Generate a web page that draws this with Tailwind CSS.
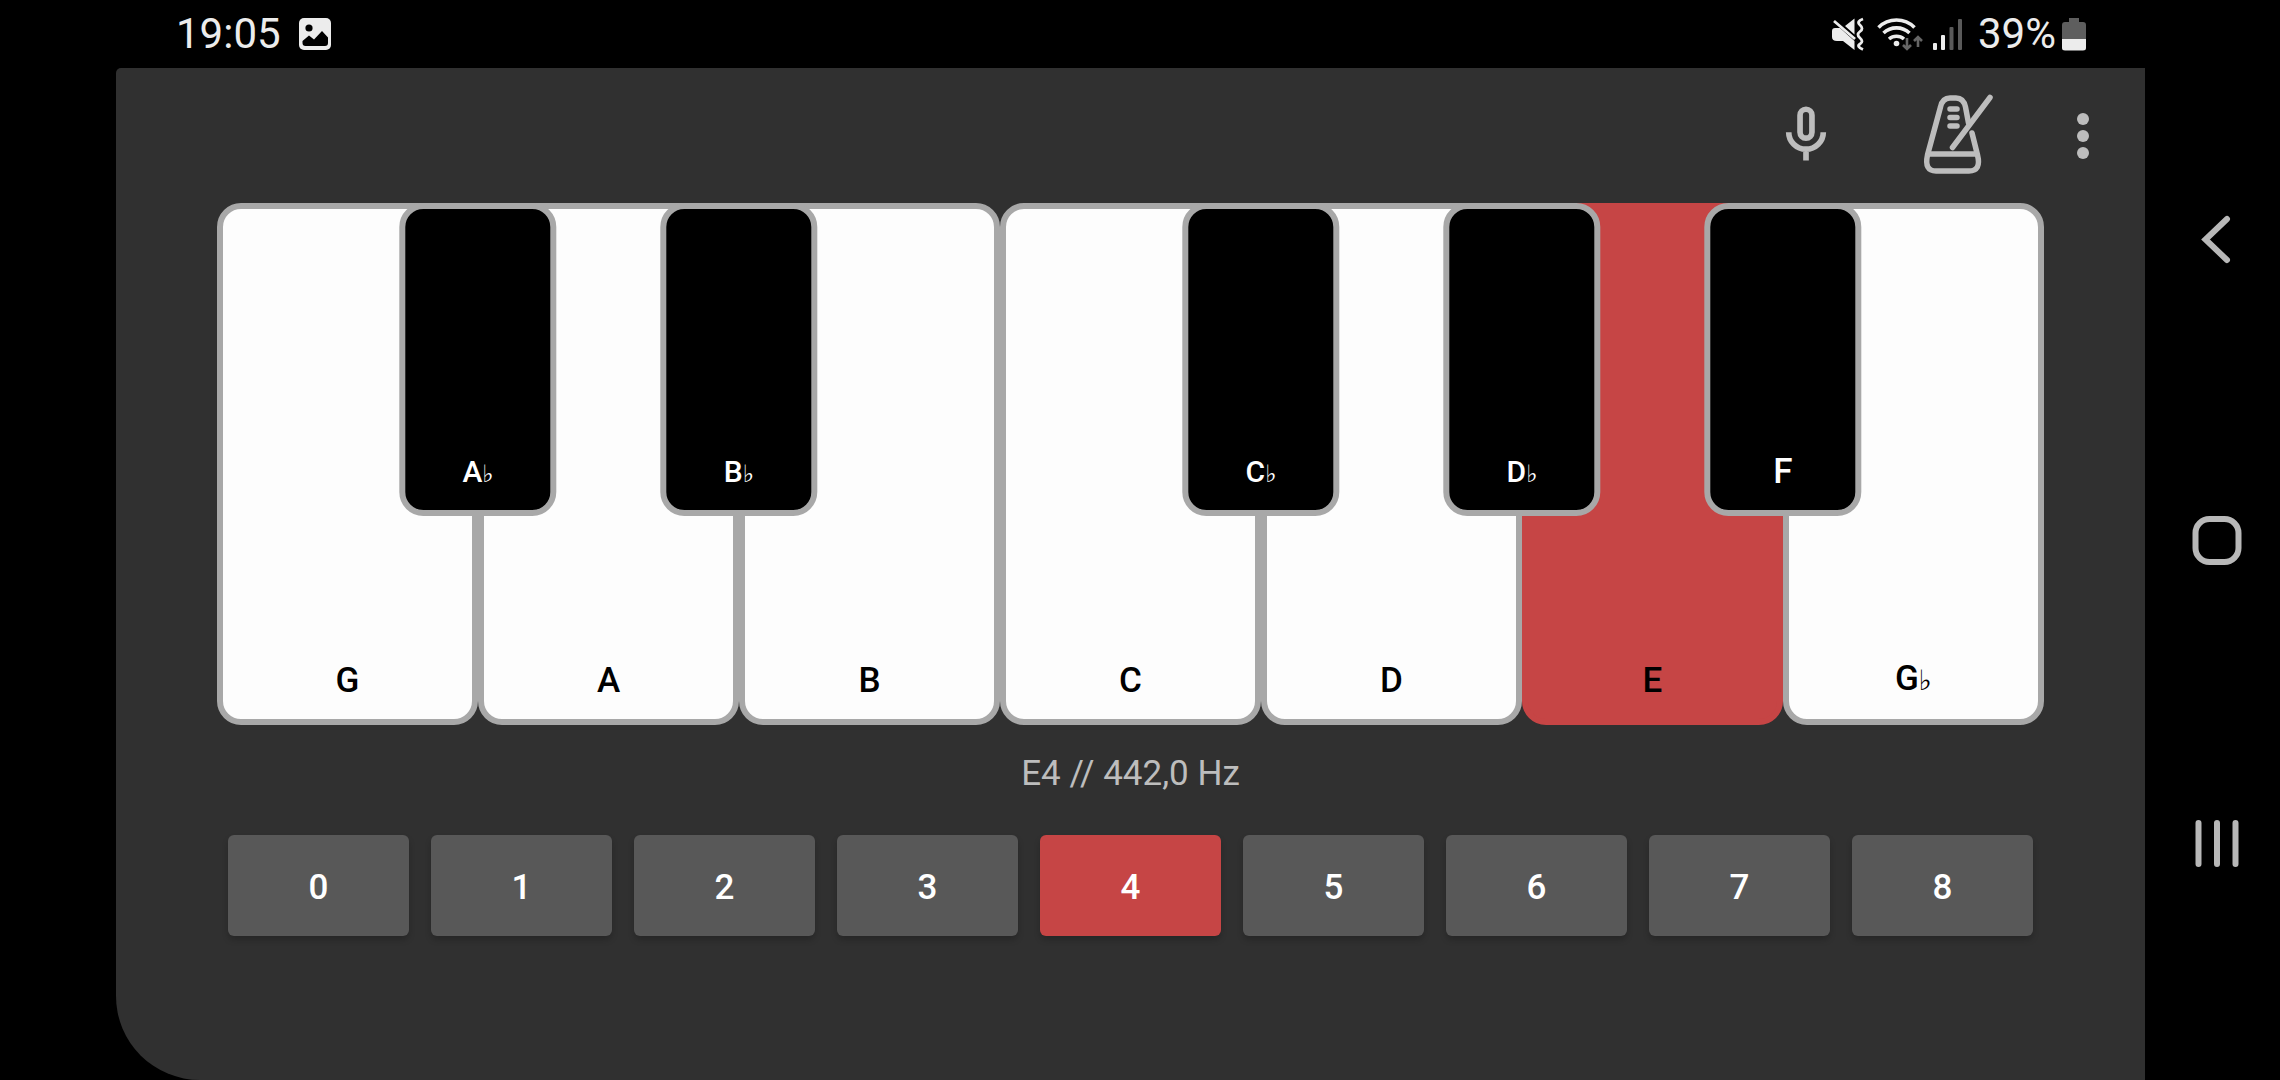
<!DOCTYPE html>
<html lang="en">
<head>
<meta charset="utf-8">
<meta name="viewport" content="width=device-width, initial-scale=1">
<title>Piano</title>
<script src="https://cdn.jsdelivr.net/npm/@tailwindcss/browser@4"></script>
</head>
<body class="flex min-h-screen bg-black font-[Roboto,'DejaVu_Sans',sans-serif]">

<div class="flex min-w-0 flex-1 flex-col">
  <!-- Status bar -->
  <header class="flex h-[68px] items-center pr-[59px] pl-[176px] text-[42px] leading-[48px] text-[#ececec]">
    <time>19:05</time>
    <svg class="ml-[18px] h-8 w-8" viewBox="0 0 32 32" aria-hidden="true">
      <rect width="32" height="32" rx="5" fill="#ececec"/>
      <circle cx="10" cy="10" r="3.6" fill="#000"/>
      <path d="M3.500 25v-2l6.500-5.500 5 4 8-8.500 6 6.500v5.500q0 3-3 3H6.500q-3 0-3-3z" fill="#000"/>
    </svg>
    <div class="ml-auto flex items-center">
      <!-- Sound off, vibrate -->
      <svg class="h-[34px] w-[34px]" viewBox="0 0 34 34" fill="#ececec" aria-hidden="true">
        <path d="M1 14q0-3 3-3h5L23.500 24v9L12 24H6q-5 0-5-4zM14 9l9.500-7.500v16z"/>
        <path d="M3 4l21 18M32 2q-7 2.500-3 6t0 6.500 0 6.500 0 6 3 5.500" fill="none" stroke="#ececec" stroke-width="2.800"/>
      </svg>
      <!-- Wi-Fi with traffic arrows -->
      <svg class="ml-3 h-[34px] w-[46px]" viewBox="0 0 46 34" fill="none" aria-hidden="true">
        <path d="M1.500 10.500a25.500 25.500 0 0 1 36 0M6.500 16a19 19 0 0 1 26 0M12 22a11.500 11.500 0 0 1 15 0" stroke="#ececec" stroke-width="3.600"/>
        <circle cx="19.500" cy="26.500" r="2.800" fill="#ececec"/>
        <path d="M30 21v10M26 28l4 4 4-4M41 30V21M37 24l4-4 4 4" stroke="#666" stroke-width="2.600"/>
      </svg>
      <!-- Mobile signal -->
      <svg class="ml-[9px] h-[34px] w-[30px]" viewBox="0 0 30 34" aria-hidden="true">
        <rect x="1" y="26" width="4" height="7" rx="1" fill="#ececec"/>
        <rect x="9" y="18" width="4" height="15" rx="1" fill="#ececec"/>
        <rect x="17.500" y="10" width="4" height="23" rx="1" fill="#5a5a5a"/>
        <rect x="26" y="2" width="4" height="31" rx="1" fill="#5a5a5a"/>
      </svg>
      <span class="ml-4">39%</span>
      <svg class="ml-[6px] h-[34px] w-6" viewBox="0 0 24 34" aria-hidden="true">
        <path d="M7 1h10v4h4q3 0 3 3v14H0V8q0-3 3-3h4z" fill="#5e5e5e"/>
        <path d="M0 22h24v9q0 2.500-3 2.500H3q-3 0-3-2.500z" fill="#ececec"/>
      </svg>
    </div>
  </header>

  <div class="ml-[116px] flex flex-1 flex-col rounded-tl-[5px] rounded-bl-[84px] bg-[#303030]">
    <!-- Toolbar -->
    <div class="flex h-[135px] items-center justify-end pr-[28px] pb-[2px]">
      <button type="button" aria-label="Microphone" class="mr-[76px]">
        <svg class="h-[68px] w-[68px]" viewBox="0 0 24 24" fill="none" stroke="#bdbdbd" stroke-width="2">
          <rect x="9.900" y="2.900" width="4.200" height="10.200" rx="2.100"/>
          <path d="M5.900 11a6.100 6 0 0 0 12.200 0M12 17v4"/>
        </svg>
      </button>
      <button type="button" aria-label="Metronome" class="mr-[49px]">
        <svg class="h-[84px] w-[84px]" viewBox="0 0 84 84" fill="none" stroke="#bdbdbd" stroke-width="5.500" stroke-linecap="round">
          <path d="M52.500 30L49.500 14Q47.500 5 40 5H34Q26.500 5 24.500 14L11.500 62Q8 78 20 78H53Q65.500 78 61.500 62L56 40"/>
          <path d="M13 61h47M74 4.500L36.500 54.500"/>
          <path d="M34 16h7M34 24.500h7M34 33h7"/>
        </svg>
      </button>
      <button type="button" aria-label="More options">
        <svg class="h-[68px] w-[68px]" viewBox="0 0 68 68" fill="#bdbdbd">
          <circle cx="34" cy="18" r="6"/><circle cx="34" cy="35" r="6"/><circle cx="34" cy="52" r="6"/>
        </svg>
      </button>
    </div>

    <main class="mx-[101px]">
      <!-- Keyboard: each cell holds a white key and the black key on its right edge -->
      <div class="grid aspect-[7/2] grid-cols-7 text-center text-[35px] leading-[44px] font-medium">
        <div class="relative">
          <button type="button" class="flex h-full w-full items-end justify-center rounded-[24px] border-[6px] border-[#a8a8a8] bg-[#fdfdfd] pb-4 text-black">G</button>
          <button type="button" class="absolute top-0 right-0 z-10 flex h-3/5 w-3/5 translate-x-1/2 items-baseline-last justify-center rounded-[24px] border-[6px] border-[#a8a8a8] bg-black pb-[18px] text-[30px] leading-9 text-white">A<span class="text-[24px] font-normal">♭</span></button>
        </div>
        <div class="relative">
          <button type="button" class="flex h-full w-full items-end justify-center rounded-[24px] border-[6px] border-[#a8a8a8] bg-[#fdfdfd] pb-4 text-black">A</button>
          <button type="button" class="absolute top-0 right-0 z-10 flex h-3/5 w-3/5 translate-x-1/2 items-baseline-last justify-center rounded-[24px] border-[6px] border-[#a8a8a8] bg-black pb-[18px] text-[30px] leading-9 text-white">B<span class="text-[24px] font-normal">♭</span></button>
        </div>
        <div class="relative">
          <button type="button" class="flex h-full w-full items-end justify-center rounded-[24px] border-[6px] border-[#a8a8a8] bg-[#fdfdfd] pb-4 text-black">B</button>
        </div>
        <div class="relative">
          <button type="button" class="flex h-full w-full items-end justify-center rounded-[24px] border-[6px] border-[#a8a8a8] bg-[#fdfdfd] pb-4 text-black">C</button>
          <button type="button" class="absolute top-0 right-0 z-10 flex h-3/5 w-3/5 translate-x-1/2 items-baseline-last justify-center rounded-[24px] border-[6px] border-[#a8a8a8] bg-black pb-[18px] text-[30px] leading-9 text-white">C<span class="text-[24px] font-normal">♭</span></button>
        </div>
        <div class="relative">
          <button type="button" class="flex h-full w-full items-end justify-center rounded-[24px] border-[6px] border-[#a8a8a8] bg-[#fdfdfd] pb-4 text-black">D</button>
          <button type="button" class="absolute top-0 right-0 z-10 flex h-3/5 w-3/5 translate-x-1/2 items-baseline-last justify-center rounded-[24px] border-[6px] border-[#a8a8a8] bg-black pb-[18px] text-[30px] leading-9 text-white">D<span class="text-[24px] font-normal">♭</span></button>
        </div>
        <div class="relative">
          <button type="button" aria-pressed="true" class="flex h-full w-full items-end justify-center rounded-[24px] border-[6px] border-[#c64545] bg-[#c64545] pb-4 text-black">E</button>
          <button type="button" class="absolute top-0 right-0 z-10 flex h-3/5 w-3/5 translate-x-1/2 items-end justify-center rounded-[24px] border-[6px] border-[#a8a8a8] bg-black pb-4 text-white">F</button>
        </div>
        <div class="relative">
          <button type="button" class="flex h-full w-full items-baseline-last justify-center rounded-[24px] border-[6px] border-[#a8a8a8] bg-[#fdfdfd] pb-4 text-black">G<span class="text-[28px] font-normal">♭</span></button>
        </div>
      </div>

      <p class="mt-6 text-center text-[35px] leading-[50px] text-[#bdbdbd]">E4 // 442,0 Hz</p>

      <!-- Octave selector -->
      <div class="mx-[11px] mt-9 grid grid-cols-9 gap-[22px] text-[35px] leading-[45px] font-medium text-white">
        <button type="button" class="rounded-md bg-[#585858] pt-[30px] pb-[26px] shadow-[0_4px_6px_rgba(0,0,0,0.2)]">0</button>
        <button type="button" class="rounded-md bg-[#585858] pt-[30px] pb-[26px] shadow-[0_4px_6px_rgba(0,0,0,0.2)]">1</button>
        <button type="button" class="rounded-md bg-[#585858] pt-[30px] pb-[26px] shadow-[0_4px_6px_rgba(0,0,0,0.2)]">2</button>
        <button type="button" class="rounded-md bg-[#585858] pt-[30px] pb-[26px] shadow-[0_4px_6px_rgba(0,0,0,0.2)]">3</button>
        <button type="button" aria-pressed="true" class="rounded-md bg-[#c64545] pt-[30px] pb-[26px] shadow-[0_4px_6px_rgba(0,0,0,0.2)]">4</button>
        <button type="button" class="rounded-md bg-[#585858] pt-[30px] pb-[26px] shadow-[0_4px_6px_rgba(0,0,0,0.2)]">5</button>
        <button type="button" class="rounded-md bg-[#585858] pt-[30px] pb-[26px] shadow-[0_4px_6px_rgba(0,0,0,0.2)]">6</button>
        <button type="button" class="rounded-md bg-[#585858] pt-[30px] pb-[26px] shadow-[0_4px_6px_rgba(0,0,0,0.2)]">7</button>
        <button type="button" class="rounded-md bg-[#585858] pt-[30px] pb-[26px] shadow-[0_4px_6px_rgba(0,0,0,0.2)]">8</button>
      </div>
    </main>
  </div>
</div>

<!-- System navigation -->
<nav aria-label="System" class="flex w-[135px] flex-col pt-[88px] pb-[86px] pl-2">
  <button type="button" aria-label="Back" class="flex flex-1 items-center justify-center">
    <svg class="h-[60px] w-[60px]" viewBox="0 0 60 60" fill="none" stroke="#b8b8b8" stroke-width="6" stroke-linecap="round"><path d="M40 10L18.500 30.500 40 51"/></svg>
  </button>
  <button type="button" aria-label="Home" class="flex flex-1 items-center justify-center">
    <svg class="h-[60px] w-[60px]" viewBox="0 0 60 60" fill="none" stroke="#b8b8b8" stroke-width="6"><rect x="8.500" y="8" width="43" height="43" rx="14"/></svg>
  </button>
  <button type="button" aria-label="Recent apps" class="flex flex-1 items-center justify-center">
    <svg class="h-[60px] w-[60px]" viewBox="0 0 60 60" fill="none" stroke="#b8b8b8" stroke-width="6" stroke-linecap="round"><path d="M11.500 10v41M30 10v41M48.500 10v41"/></svg>
  </button>
</nav>

</body>
</html>
